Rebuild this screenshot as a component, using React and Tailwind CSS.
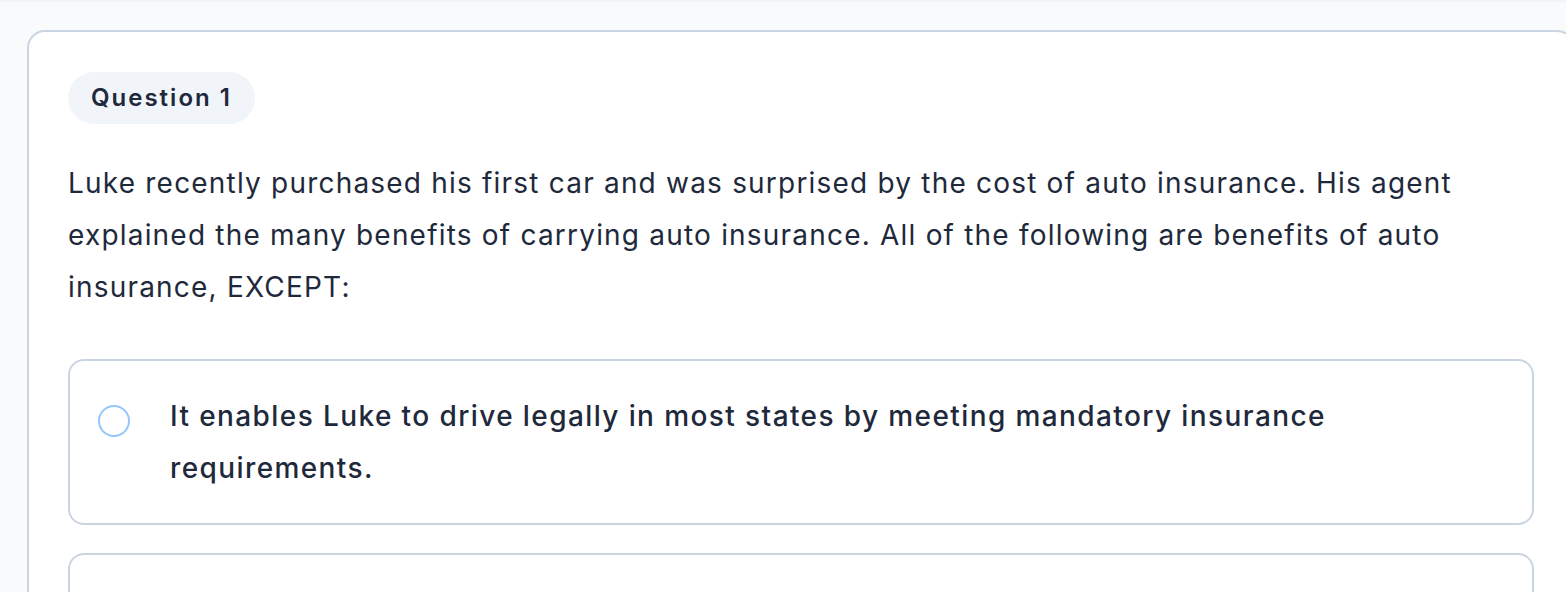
export default function App() {
  const font = { fontFamily: "Inter, 'Noto Sans', sans-serif" };
  return (
    <div className="w-[1566px] h-[592px] overflow-hidden bg-[#f8fafc] border-t-2 border-[#f1f3f6]" style={font}>
      <div className="pl-[27px] pt-[28px]">
        <div className="w-[1548px] bg-white border-2 border-[#cbd5e1] rounded-[18px] px-[39px] pt-[40px] pb-[80px]">
          <div className="inline-flex items-center h-[52px] px-[23px] rounded-full bg-[#f1f5f9] text-[24px] tracking-[2px] font-semibold text-[#1e293b]">
            Question 1
          </div>
          <p className="mt-[33px] w-[1420px] text-[28px] tracking-[1.2px] leading-[52px] text-[#1e293b]">
            Luke recently purchased his first car and was surprised by the cost of auto insurance. His agent explained the many benefits of carrying auto insurance. All of the following are benefits of auto insurance, EXCEPT:
          </p>
          <div className="mt-[46px] flex flex-col gap-[28px]">
            {[
              "It enables Luke to drive legally in most states by meeting mandatory insurance requirements.",
              "It protects Luke financially if he causes an accident that injures another person.",
            ].map((t, i) => (
              <div key={i} className="flex items-start gap-[40px] border-2 border-[#cbd5e1] rounded-[16px] px-[28px] py-[29px]">
                <div className="mt-[15px] w-[32px] h-[32px] shrink-0 rounded-full border-2 border-[#93c5fd] bg-white" />
                <div className="w-[1250px] text-[28px] tracking-[1.4px] leading-[52px] font-medium text-[#1e293b]">{t}</div>
              </div>
            ))}
          </div>
        </div>
      </div>
    </div>
  );
}
